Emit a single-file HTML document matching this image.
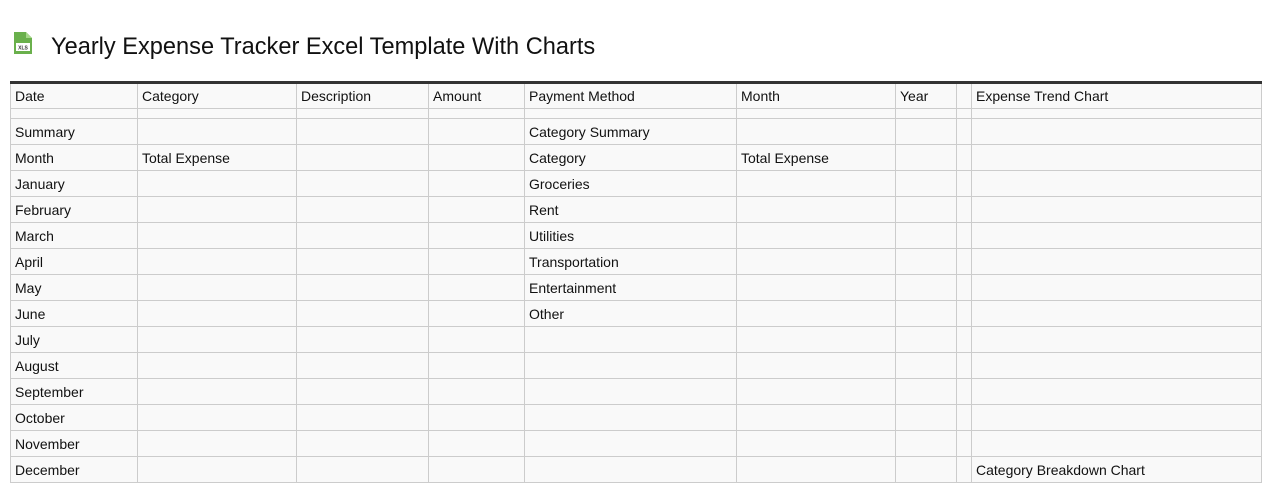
<!DOCTYPE html>
<html><head><style>
body{margin:0;background:#fff;font-family:"Liberation Sans",Roboto,sans-serif;}
h1{position:absolute;left:51px;top:31px;margin:0;font-size:23.6px;font-weight:normal;color:#111;line-height:32px;}
table{position:absolute;left:10px;top:81px;border-collapse:collapse;table-layout:fixed;width:1252px;border-top:3px solid #333;}
td{border:1px solid #ccc;background:#f9f9f9;font-size:14px;color:#111;padding:0 4px;height:25px;white-space:nowrap;overflow:hidden;}
tr.h td{height:24px;}
tr.e td{height:9px;}
</style></head><body>
<svg style="position:absolute;left:13px;top:32px" width="20" height="22" viewBox="0 0 20 22">
<path d="M1 0h12l6 6v16H1z" fill="#6ab04c"/><path d="M13 0v6h6z" fill="#a6d88a"/>
<rect x="3" y="11" width="14" height="8" fill="#fff"/>
<text x="10" y="17.5" font-size="5" font-family="Liberation Sans" font-weight="bold" text-anchor="middle" fill="#333">XLS</text>
</svg>
<h1>Yearly Expense Tracker Excel Template With Charts</h1>
<table>
<colgroup><col style="width:127px"><col style="width:159px"><col style="width:132px"><col style="width:96px"><col style="width:212px"><col style="width:159px"><col style="width:61px"><col style="width:15px"><col></colgroup>
<tr class="h"><td>Date</td><td>Category</td><td>Description</td><td>Amount</td><td>Payment Method</td><td>Month</td><td>Year</td><td></td><td>Expense Trend Chart</td></tr>
<tr class="e"><td></td><td></td><td></td><td></td><td></td><td></td><td></td><td></td><td></td></tr>
<tr><td>Summary</td><td></td><td></td><td></td><td>Category Summary</td><td></td><td></td><td></td><td></td></tr>
<tr><td>Month</td><td>Total Expense</td><td></td><td></td><td>Category</td><td>Total Expense</td><td></td><td></td><td></td></tr>
<tr><td>January</td><td></td><td></td><td></td><td>Groceries</td><td></td><td></td><td></td><td></td></tr>
<tr><td>February</td><td></td><td></td><td></td><td>Rent</td><td></td><td></td><td></td><td></td></tr>
<tr><td>March</td><td></td><td></td><td></td><td>Utilities</td><td></td><td></td><td></td><td></td></tr>
<tr><td>April</td><td></td><td></td><td></td><td>Transportation</td><td></td><td></td><td></td><td></td></tr>
<tr><td>May</td><td></td><td></td><td></td><td>Entertainment</td><td></td><td></td><td></td><td></td></tr>
<tr><td>June</td><td></td><td></td><td></td><td>Other</td><td></td><td></td><td></td><td></td></tr>
<tr><td>July</td><td></td><td></td><td></td><td></td><td></td><td></td><td></td><td></td></tr>
<tr><td>August</td><td></td><td></td><td></td><td></td><td></td><td></td><td></td><td></td></tr>
<tr><td>September</td><td></td><td></td><td></td><td></td><td></td><td></td><td></td><td></td></tr>
<tr><td>October</td><td></td><td></td><td></td><td></td><td></td><td></td><td></td><td></td></tr>
<tr><td>November</td><td></td><td></td><td></td><td></td><td></td><td></td><td></td><td></td></tr>
<tr><td>December</td><td></td><td></td><td></td><td></td><td></td><td></td><td></td><td>Category Breakdown Chart</td></tr>
</table>
</body></html>
